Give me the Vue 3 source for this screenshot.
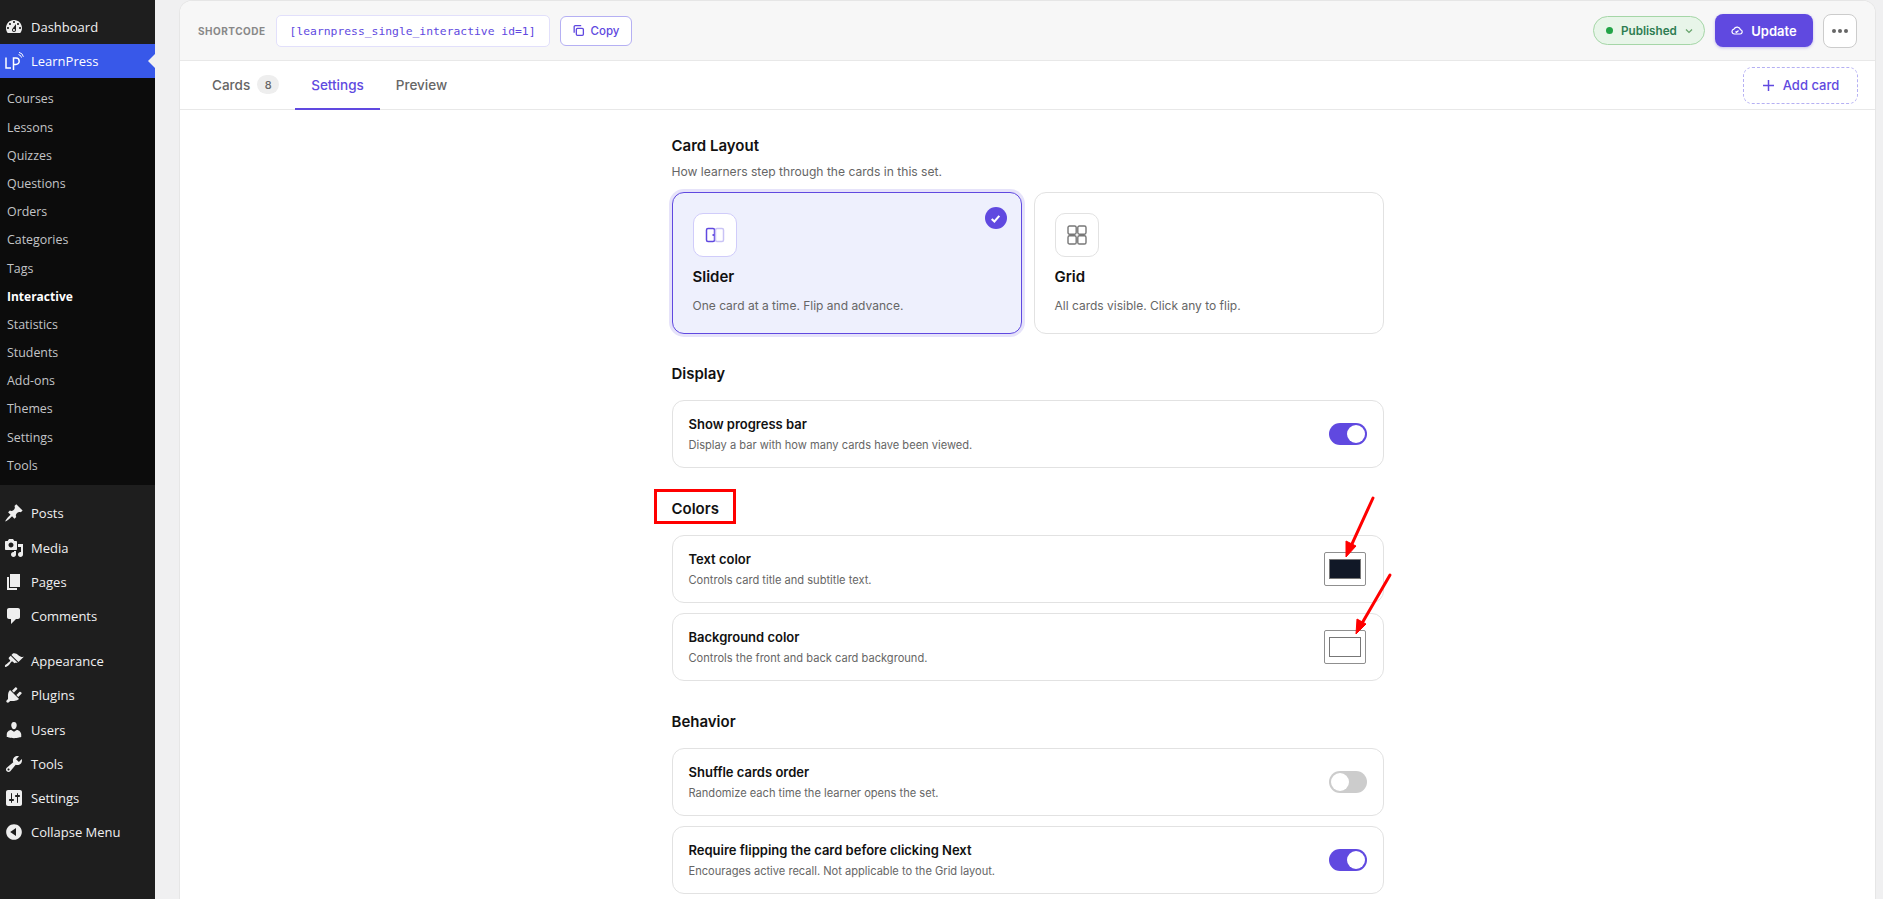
<script setup>
const submenu = ['Courses', 'Lessons', 'Quizzes', 'Questions', 'Orders', 'Categories', 'Tags', 'Interactive', 'Statistics', 'Students', 'Add-ons', 'Themes', 'Settings', 'Tools']

const menuTop = [
  { label: 'Posts', d: 'M10.44 3.02l1.82-1.82 6.36 6.35-1.83 1.82c-1.05-.68-2.48-.57-3.41.36l-.75.75c-.92.93-1.04 2.35-.35 3.41l-1.83 1.82-2.41-2.41-2.8 2.79c-.42.42-3.38 2.71-3.8 2.29s1.86-3.39 2.28-3.81l2.79-2.79L4.1 9.36l1.83-1.82c1.05.69 2.48.57 3.4-.36l.75-.75c.93-.92 1.05-2.35.36-3.41z' },
  { label: 'Media', d: 'M13 11V4c0-.55-.45-1-1-1h-1.67L9 1H5L3.67 3H2c-.55 0-1 .45-1 1v7c0 .55.45 1 1 1h10c.55 0 1-.45 1-1zM7 4.5c1.38 0 2.5 1.12 2.5 2.5S8.38 9.5 7 9.5 4.5 8.38 4.5 7 5.62 4.5 7 4.5zM14 6h5v10.5c0 1.38-1.12 2.5-2.5 2.5S14 17.88 14 16.5s1.12-2.5 2.5-2.5c.17 0 .34.02.5.05V9h-3V6zm-4 8.05V13h2v3.5c0 1.38-1.12 2.5-2.5 2.5S7 17.88 7 16.5 8.12 14 9.5 14c.17 0 .34.02.5.05z' },
  { label: 'Pages', d: 'M6 15V2h10v13H6zm-1 1h8v2H3V5h2v11z' },
  { label: 'Comments', d: 'M5 2h9c1.1 0 2 .9 2 2v7c0 1.1-.9 2-2 2h-2l-5 5v-5H5c-1.1 0-2-.9-2-2V4c0-1.1.9-2 2-2z' }
]

const menuBottom = [
  { label: 'Appearance', d: 'M14.48 11.06L7.41 3.99l1.5-1.5c.5-.56 2.3-.47 3.51.32 1.21.8 1.43 1.28 2.91 2.1 1.18.64 2.45 1.26 4.45.85zm-.71.71L6.7 4.7 4.93 6.47c-.39.39-.39 1.02 0 1.41l1.06 1.06c.39.39.39 1.03 0 1.42-.6.6-1.43 1.11-2.21 1.69-.35.26-.7.53-1.01.84C1.43 13.23.4 14.98 1.1 15.68c.7.7 2.45-.33 3.79-1.67.31-.31.58-.66.85-1.02.57-.78 1.08-1.61 1.69-2.21.39-.39 1.02-.39 1.41 0l1.06 1.06c.39.39 1.02.39 1.41 0z' },
  { label: 'Plugins', d: 'M13.11 4.36L9.87 7.6 8 5.73l3.24-3.24c.35-.34 1.05-.2 1.56.32.52.51.66 1.21.31 1.55zm-8 1.77l.91-1.12 9.01 9.01-1.19.84c-.71.71-2.63 1.16-3.82 1.16H6.14L4.9 17.26c-.59.59-1.54.59-2.12 0-.59-.58-.59-1.53 0-2.12l1.24-1.24v-3.88c0-1.13.4-3.19 1.09-3.89zm7.26 3.97l3.24-3.24c.34-.35 1.04-.21 1.55.31.52.51.66 1.21.31 1.55l-3.24 3.25z' },
  { label: 'Users', d: 'M10 9.25c-2.27 0-2.73-3.44-2.73-3.44C7 4.02 7.82 2 9.97 2c2.16 0 2.98 2.02 2.71 3.81 0 0-.41 3.44-2.68 3.44zm0 2.57L12.72 10c2.39 0 4.52 2.33 4.52 4.53v2.49s-3.65 1.13-7.24 1.13c-3.65 0-7.24-1.13-7.24-1.13v-2.49c0-2.25 1.94-4.48 4.47-4.48z' },
  { label: 'Tools', d: 'M16.68 9.77c-1.34 1.34-3.3 1.67-4.95.99l-5.41 6.52c-.99.99-2.59.99-3.58 0s-.99-2.59 0-3.57l6.52-5.42c-.68-1.65-.35-3.61.99-4.95 1.28-1.28 3.12-1.62 4.72-1.06l-2.89 2.89 2.82 2.82 2.86-2.87c.53 1.58.18 3.39-1.08 4.65zM3.81 16.21c.4.39 1.04.39 1.43 0 .4-.4.4-1.04 0-1.43-.39-.4-1.03-.4-1.43 0-.39.39-.39 1.03 0 1.43z' },
  { label: 'Settings', d: 'M18 16V4c0-1.1-.9-2-2-2H4c-1.1 0-2 .9-2 2v12c0 1.1.9 2 2 2h12c1.1 0 2-.9 2-2zM8 11h1c.55 0 1 .45 1 1s-.45 1-1 1H8v1.5c0 .28-.22.5-.5.5s-.5-.22-.5-.5V13H6c-.55 0-1-.45-1-1s.45-1 1-1h1V5.5c0-.28.22-.5.5-.5s.5.22.5.5V11zm5-2h-1c-.55 0-1-.45-1-1s.45-1 1-1h1V5.5c0-.28.22-.5.5-.5s.5.22.5.5V7h1c.55 0 1 .45 1 1s-.45 1-1 1h-1v5.5c0 .28-.22.5-.5.5s-.5-.22-.5-.5V9z' },
  { label: 'Collapse Menu', d: 'M10 2.16c4.33 0 7.84 3.51 7.84 7.84s-3.51 7.84-7.84 7.84S2.16 14.33 2.16 10 5.71 2.16 10 2.16zm2 11.72V6.12L6.18 9.97z' }
]

const dashboardIcon = 'M3.76 16h12.48c1.1-1.37 1.76-3.11 1.76-5 0-4.42-3.58-8-8-8s-8 3.58-8 8c0 1.89.66 3.63 1.76 5zM10 4c.55 0 1 .45 1 1s-.45 1-1 1-1-.45-1-1 .45-1 1-1zM6 6c.55 0 1 .45 1 1s-.45 1-1 1-1-.45-1-1 .45-1 1-1zm8 0c.55 0 1 .45 1 1s-.45 1-1 1-1-.45-1-1 .45-1 1-1zm-5.37 5.55L12 7v6c0 1.1-.9 2-2 2s-2-.9-2-2c0-.57.24-1.08.63-1.45zM4 10c.55 0 1 .45 1 1s-.45 1-1 1-1-.45-1-1 .45-1 1-1zm12 0c.55 0 1 .45 1 1s-.45 1-1 1-1-.45-1-1 .45-1 1-1zm-5 3c0-.55-.45-1-1-1s-1 .45-1 1 .45 1 1 1 1-.45 1-1z'

const colorRows = [
  { title: 'Text color', desc: 'Controls card title and subtitle text.', color: '#111827' },
  { title: 'Background color', desc: 'Controls the front and back card background.', color: '#ffffff' }
]

const behaviorRows = [
  { title: 'Shuffle cards order', desc: 'Randomize each time the learner opens the set.', on: false },
  { title: 'Require flipping the card before clicking Next', desc: 'Encourages active recall. Not applicable to the Grid layout.', on: true }
]
</script>

<template>
  <div class="page">
    <aside class="sidebar">
      <div class="menu-top">
        <a class="menu-item">
          <svg class="dash" viewBox="0 0 20 20"><path :d="dashboardIcon" fill-rule="evenodd" /></svg>
          <span>Dashboard</span>
        </a>
        <a class="menu-item current">
          <svg class="logo" width="20" height="20" viewBox="0 0 20 20" fill="none" stroke="#fff" stroke-width="1.5">
            <path d="M2 6.5V17h5" />
            <path d="M9.5 19V7H12a3.2 3.2 0 0 1 0 6.4H9.5" />
            <path d="M14.5 3.6a3.6 3.6 0 0 1 3 3M15 1.4a5.6 5.6 0 0 1 4.4 4.4" stroke-width="1" />
          </svg>
          <span>LearnPress</span>
        </a>
      </div>
      <ul class="submenu">
        <li v-for="item in submenu" :key="item" :class="{ active: item === 'Interactive' }">{{ item }}</li>
      </ul>
      <div class="menu-group">
        <a v-for="item in menuTop" :key="item.label" class="menu-item">
          <svg class="dash" viewBox="0 0 20 20"><path :d="item.d" /></svg>
          <span>{{ item.label }}</span>
        </a>
      </div>
      <div class="menu-group">
        <a v-for="item in menuBottom" :key="item.label" class="menu-item">
          <svg class="dash" viewBox="0 0 20 20"><path :d="item.d" /></svg>
          <span>{{ item.label }}</span>
        </a>
      </div>
    </aside>

    <main class="panel">
      <header class="topbar">
        <span class="sc-label">SHORTCODE</span>
        <code class="sc-value">[learnpress_single_interactive id=1]</code>
        <button class="copy-btn">
          <svg width="13" height="13" viewBox="0 0 24 24" fill="none" stroke="currentColor" stroke-width="2.4">
            <rect x="8" y="8" width="13" height="13" rx="2" />
            <path d="M4 16V5a2 2 0 0 1 2-2h11" />
          </svg>
          Copy
        </button>
        <div class="topbar-right">
          <div class="status">
            <i class="dot"></i>
            <span>Published</span>
            <svg width="10" height="10" viewBox="0 0 10 10" fill="none" stroke="#66a36a" stroke-width="1.2"><path d="M2 3.5 5 6.5 8 3.5" /></svg>
          </div>
          <button class="update-btn">
            <svg width="12" height="12" viewBox="0 0 24 24" fill="none" stroke="currentColor" stroke-width="2.4">
              <path d="M7 18a5 5 0 0 1-1-9.9 7 7 0 0 1 13 1.4A4.3 4.3 0 0 1 18 18z" />
              <path d="M9 13l2 2 4-4" />
            </svg>
            Update
          </button>
          <button class="more-btn"><i></i><i></i><i></i></button>
        </div>
      </header>

      <nav class="tabs">
        <a class="tab">Cards <span class="badge">8</span></a>
        <a class="tab selected">Settings</a>
        <a class="tab">Preview</a>
        <button class="add-card">
          <svg width="13" height="13" viewBox="0 0 13 13" stroke="currentColor" stroke-width="1.5"><path d="M6.5 1v11M1 6.5h11" /></svg>
          Add card
        </button>
      </nav>

      <div class="content">
        <section class="layout-section">
          <h3>Card Layout</h3>
          <p class="hint">How learners step through the cards in this set.</p>
          <div class="layout-cards">
            <div class="layout-card picked">
              <div class="icon-box">
                <svg width="20" height="20" viewBox="0 0 20 20" fill="none" stroke="#6049e0" stroke-width="1.5">
                  <rect x="1.5" y="3.5" width="8" height="13" rx="1.5" />
                  <rect x="10.5" y="3.5" width="8" height="13" rx="1.5" stroke="#c9c3f5" />
                  <circle cx="8.3" cy="10" r="1" fill="#6049e0" stroke="none" />
                </svg>
              </div>
              <h4>Slider</h4>
              <p>One card at a time. Flip and advance.</p>
              <span class="check">
                <svg width="13" height="13" viewBox="0 0 12 12" fill="none" stroke="#fff" stroke-width="1.9"><path d="M2.5 6.5 5 8.8 9.5 3.6" /></svg>
              </span>
            </div>
            <div class="layout-card">
              <div class="icon-box">
                <svg width="20" height="20" viewBox="0 0 20 20" fill="none" stroke="#777" stroke-width="1.4">
                  <rect x="1" y="1" width="8.2" height="8.2" rx="1.6" />
                  <rect x="10.8" y="1" width="8.2" height="8.2" rx="1.6" />
                  <rect x="1" y="10.8" width="8.2" height="8.2" rx="1.6" />
                  <rect x="10.8" y="10.8" width="8.2" height="8.2" rx="1.6" />
                </svg>
              </div>
              <h4>Grid</h4>
              <p>All cards visible. Click any to flip.</p>
            </div>
          </div>
        </section>

        <section class="settings-section">
          <h3>Display</h3>
          <div class="row">
            <div>
              <div class="row-title">Show progress bar</div>
              <div class="row-desc">Display a bar with how many cards have been viewed.</div>
            </div>
            <span class="toggle on"></span>
          </div>
        </section>

        <section class="settings-section">
          <h3>Colors</h3>
          <div v-for="row in colorRows" :key="row.title" class="row">
            <div>
              <div class="row-title">{{ row.title }}</div>
              <div class="row-desc">{{ row.desc }}</div>
            </div>
            <span class="swatch"><i :style="{ background: row.color }"></i></span>
          </div>
        </section>

        <section class="settings-section">
          <h3>Behavior</h3>
          <div v-for="row in behaviorRows" :key="row.title" class="row">
            <div>
              <div class="row-title">{{ row.title }}</div>
              <div class="row-desc">{{ row.desc }}</div>
            </div>
            <span class="toggle" :class="{ on: row.on }"></span>
          </div>
        </section>
      </div>
    </main>

    <!-- screenshot annotations, drawn over the page -->
    <div class="note-box"></div>
    <svg class="notes" width="1883" height="899" viewBox="0 0 1883 899">
      <g fill="#ff0000" stroke="#ff0000">
        <path d="M1373 498 1351 546" stroke-width="3" stroke-linecap="round" />
        <path d="M1346 557 1346 541 1356 546z" stroke-width="1" />
        <path d="M1390 575 1361 625" stroke-width="3" stroke-linecap="round" />
        <path d="M1356 634 1357 619 1366 624z" stroke-width="1" />
      </g>
    </svg>
  </div>
</template>

<style>
html, body {
  margin: 0;
  background: #f0f0f1;
  overflow: hidden;
}
</style>

<style scoped>
.page {
  position: relative;
  display: flex;
  width: 1883px;
  height: 899px;
  overflow: hidden;
  background: #f0f0f1;
  font-family: Inter, "Liberation Sans", sans-serif;
}

/* sidebar */
.sidebar {
  width: 155px;
  flex-shrink: 0;
  background: #1e1e1e;
  font-family: "Open Sans", "Liberation Sans", sans-serif;
  font-size: 13px;
  color: #f0f0f1;
  padding-top: 10px;
  box-sizing: border-box;
}

.menu-item {
  display: flex;
  align-items: center;
  gap: 7px;
  height: 34.2px;
  padding-left: 4px;
  box-sizing: border-box;
}

.dash {
  width: 20px;
  height: 20px;
  fill: #eee;
  flex-shrink: 0;
}

.logo {
  flex-shrink: 0;
}

.menu-item.current {
  position: relative;
  background: #3858e9;
  color: #fff;
}

.menu-item.current::after {
  content: "";
  position: absolute;
  right: 0;
  top: 10px;
  border: 7px solid transparent;
  border-right-color: #f0f0f1;
  border-left-width: 0;
}

.submenu {
  list-style: none;
  margin: 0;
  padding: 7px 0 6px;
  background: #0c0c0c;
  color: #c3c4c7;
  font-size: 12.4px;
  height: 407px;
  box-sizing: border-box;
}

.submenu li {
  height: 28.2px;
  line-height: 28.2px;
  padding-left: 7px;
}

.submenu li.active {
  color: #fff;
  font-size: 12px;
  font-weight: 700;
}

.menu-group {
  padding-top: 11px;
}

/* panel */
.panel {
  flex: 1;
  margin: 1px 8px 0 25px;
  background: #fff;
  border-radius: 12px 12px 0 0;
  box-shadow: 0 0 0 1px #e6e6e6;
  min-width: 0;
}

.topbar {
  display: flex;
  align-items: center;
  height: 59px;
  padding: 0 18px;
  background: #f7f7f7;
  border-bottom: 1px solid #e8e8e8;
  border-radius: 12px 12px 0 0;
}

.sc-label {
  font-size: 10px;
  font-weight: 700;
  letter-spacing: 0.5px;
  color: #888;
  margin-right: 10px;
}

.sc-value {
  width: 274px;
  height: 32px;
  line-height: 30px;
  box-sizing: border-box;
  text-align: center;
  background: #fff;
  border: 1px solid #e2e0fb;
  border-radius: 5px;
  font-family: "DejaVu Sans Mono", "Liberation Mono", monospace;
  font-size: 11.35px;
  color: #6049e0;
}

.copy-btn {
  display: flex;
  align-items: center;
  gap: 6px;
  margin-left: 10px;
  width: 72px;
  height: 30px;
  justify-content: center;
  padding: 0;
  background: #fff;
  border: 1px solid #b5b0f3;
  border-radius: 6px;
  font: 500 11.5px Inter, sans-serif;
  color: #6049e0;
}

.topbar-right {
  display: flex;
  align-items: center;
  margin-left: auto;
}

.status {
  display: flex;
  align-items: center;
  gap: 6px;
  width: 112px;
  height: 29px;
  box-sizing: border-box;
  padding-left: 12px;
  background: #e8f5e9;
  border: 1px solid #a5d6a7;
  border-radius: 15px;
  font-size: 11.7px;
  font-weight: 600;
  color: #2e7d52;
}

.dot {
  width: 7px;
  height: 7px;
  border-radius: 50%;
  background: #22a447;
}

.status span {
  margin: 0 1px 0 2px;
}

.update-btn {
  display: flex;
  align-items: center;
  justify-content: center;
  gap: 8px;
  margin-left: 10px;
  width: 98px;
  height: 33px;
  padding: 0;
  background: #6049e0;
  border: none;
  border-radius: 8px;
  box-shadow: 0 1px 3px rgba(96, 73, 224, 0.35);
  font: 600 13px Inter, sans-serif;
  color: #fff;
}

.more-btn {
  display: flex;
  align-items: center;
  justify-content: center;
  gap: 2px;
  margin-left: 10px;
  width: 34px;
  height: 34px;
  padding: 0;
  background: #fff;
  border: 1px solid #ccc;
  border-radius: 8px;
}

.more-btn i {
  width: 4px;
  height: 4px;
  border-radius: 50%;
  background: #666;
}

/* tabs */
.tabs {
  display: flex;
  align-items: center;
  height: 49px;
  padding: 0 17px 0 16px;
  border-bottom: 1px solid #e8e8e8;
  box-sizing: border-box;
}

.tab {
  display: flex;
  align-items: center;
  gap: 7px;
  height: 100%;
  box-sizing: border-box;
  padding: 0 16px;
  font-size: 13.5px;
  font-weight: 500;
  color: #666;
  border-bottom: 2px solid transparent;
  margin-bottom: -1px;
}

.tab.selected {
  color: #6049e0;
  border-bottom-color: #6049e0;
}

.badge {
  display: flex;
  align-items: center;
  justify-content: center;
  width: 22px;
  height: 19px;
  border-radius: 10px;
  background: #eee;
  font-size: 11px;
  color: #666;
}

.add-card {
  display: flex;
  align-items: center;
  justify-content: center;
  gap: 8px;
  margin-left: auto;
  width: 115px;
  height: 37px;
  padding: 0;
  background: #fff;
  border: 1px dashed #b5b0f3;
  border-radius: 9px;
  font: 500 13px Inter, sans-serif;
  color: #6049e0;
}

/* settings column */
.content {
  width: 712px;
  margin: 0 auto;
}

h3 {
  margin: 0;
  font-size: 15px;
  line-height: 20px;
  font-weight: 600;
  color: #111;
}

.layout-section {
  padding-top: 26px;
  margin-bottom: -1px;
}

.hint {
  margin: 6px 0 0;
  font-size: 12.1px;
  line-height: 20px;
  color: #666;
}

.layout-cards {
  display: grid;
  grid-template-columns: 350px 350px;
  gap: 12px;
  margin-top: 10px;
}

.layout-card {
  position: relative;
  height: 142px;
  box-sizing: border-box;
  padding: 20px;
  border: 1px solid #e2e2e2;
  border-radius: 12px;
}

.layout-card.picked {
  background: #eef0fd;
  border-color: #6049e0;
  box-shadow: 0 0 0 3px #e6e3fa;
}

.icon-box {
  display: flex;
  align-items: center;
  justify-content: center;
  width: 44px;
  height: 44px;
  box-sizing: border-box;
  background: #fff;
  border: 1px solid #e2e2e2;
  border-radius: 10px;
}

.picked .icon-box {
  border-color: #d0ccfa;
}

h4 {
  margin: 10px 0 0;
  font-size: 15px;
  line-height: 20px;
  font-weight: 600;
  color: #111;
}

.layout-card p {
  margin: 9px 0 0;
  font-size: 12px;
  line-height: 20px;
  color: #666;
}

.check {
  position: absolute;
  top: 14px;
  right: 14px;
  display: flex;
  align-items: center;
  justify-content: center;
  width: 22px;
  height: 22px;
  border-radius: 50%;
  background: #6049e0;
}

.settings-section {
  padding-top: 31px;
}

.settings-section h3 {
  margin-bottom: 16px;
}

.row {
  display: flex;
  align-items: center;
  justify-content: space-between;
  height: 68px;
  box-sizing: border-box;
  padding: 0 16px;
  border: 1px solid #e2e2e2;
  border-radius: 12px;
}

.row + .row {
  margin-top: 10px;
}

.row-title {
  font-size: 13px;
  line-height: 18px;
  font-weight: 600;
  color: #111;
}

.row-desc {
  margin-top: 4px;
  font-size: 11.1px;
  line-height: 16px;
  color: #666;
}

.toggle {
  position: relative;
  width: 38px;
  height: 22px;
  border-radius: 11px;
  background: #ccc;
}

.toggle::after {
  content: "";
  position: absolute;
  top: 2px;
  left: 2px;
  width: 18px;
  height: 18px;
  border-radius: 50%;
  background: #fff;
}

.toggle.on {
  background: #6049e0;
}

.toggle.on::after {
  left: 18px;
}

.swatch {
  display: flex;
  align-items: center;
  justify-content: center;
  width: 42px;
  height: 34px;
  margin-right: 1px;
  box-sizing: border-box;
  background: #fff;
  border: 1px solid #8f8f8f;
  border-radius: 2px;
}

.swatch i {
  width: 32px;
  height: 20px;
  box-sizing: border-box;
  border: 1px solid #777;
}

/* annotations */
.note-box {
  position: absolute;
  left: 654px;
  top: 489px;
  width: 82px;
  height: 35px;
  box-sizing: border-box;
  border: 3px solid #ff0000;
}

.notes {
  position: absolute;
  left: 0;
  top: 0;
  pointer-events: none;
}
</style>
